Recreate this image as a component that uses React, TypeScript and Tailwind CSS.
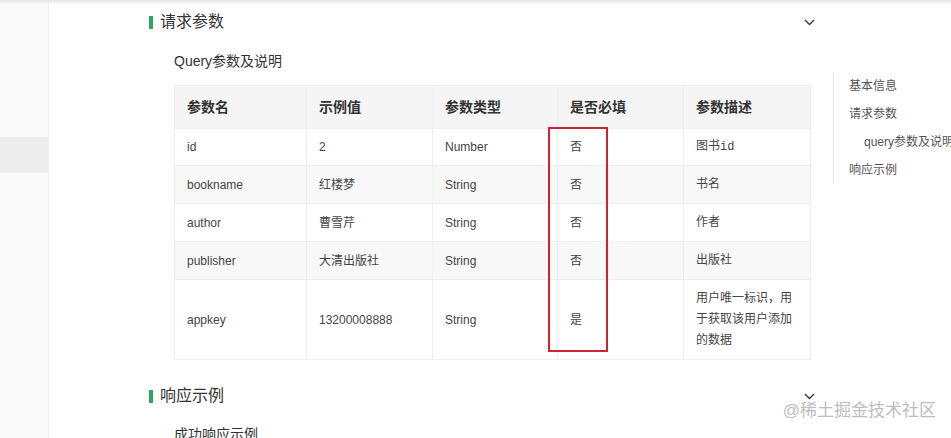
import React from 'react';

const rows = [
  { name: 'id', value: '2', type: 'Number', required: '否', desc: 'book-id' },
  { name: 'bookname', value: '红楼梦', type: 'String', required: '否', desc: '书名' },
  { name: 'author', value: '曹雪芹', type: 'String', required: '否', desc: '作者' },
  { name: 'publisher', value: '大清出版社', type: 'String', required: '否', desc: '出版社' },
  { name: 'appkey', value: '13200008888', type: 'String', required: '是', desc: '用户唯一标识，用于获取该用户添加的数据' },
];

const Chevron = () => (
  <svg width="11" height="7" viewBox="0 0 11 7" fill="none">
    <polyline points="1,1 5.5,5.5 10,1" stroke="#333" strokeWidth="1.3" />
  </svg>
);

const SectionTitle = ({ title }: { title: string }) => (
  <div className="flex h-[20px] items-center justify-between">
    <div className="flex items-center">
      <span className="mr-[7px] h-[13px] w-[4px] bg-[#2aa85c]" />
      <span className="text-[16px] leading-[20px] text-[#333]">{title}</span>
    </div>
    <span className="mr-[4px] flex items-center">
      <Chevron />
    </span>
  </div>
);

export default function App() {
  return (
    <div
      className="relative flex h-[438px] w-[951px] overflow-hidden bg-white"
      style={{ fontFamily: '"Liberation Sans", "Noto Sans CJK SC", sans-serif' }}
    >
      <div className="pointer-events-none absolute inset-x-0 top-0 h-[5px] bg-gradient-to-b from-[#e6e6e6] to-transparent" />

      {/* sidebar */}
      <aside className="w-[49px] shrink-0 border-r border-[#eeeeee] bg-[#fafafa] pt-[137px]">
        <div className="h-[36px] border-y border-[#f0f0f0] bg-[#ededed]" />
      </aside>

      <div className="flex pl-[100px]">
        <main className="w-[670px] shrink-0 pt-[12px]">
          <SectionTitle title="请求参数" />

          <p className="mt-[19px] pl-[25px] text-[14px] leading-[20px] text-[#333]">Query参数及说明</p>

          <div className="relative ml-[25px] mt-[14px] w-[636px]">
            <table className="w-[636px] table-fixed border-collapse border border-[#eeeeee] text-[12px] text-[#444]">
              <colgroup>
                <col className="w-[132px]" />
                <col className="w-[126px]" />
                <col className="w-[125px]" />
                <col className="w-[126px]" />
                <col className="w-[127px]" />
              </colgroup>
              <thead>
                <tr className="h-[43px] bg-[#f5f5f5]">
                  {['参数名', '示例值', '参数类型', '是否必填', '参数描述'].map((h) => (
                    <th key={h} className="border border-[#eeeeee] px-[12px] text-left text-[14px] font-bold text-[#333]">
                      {h}
                    </th>
                  ))}
                </tr>
              </thead>
              <tbody>
                {rows.map((r, i) => (
                  <tr
                    key={r.name}
                    className={`${r.name === 'appkey' ? 'h-[80px]' : i === 0 ? 'h-[37px]' : 'h-[38px]'} ${i % 2 === 1 ? 'bg-[#f8f8f8]' : 'bg-white'}`}
                  >
                    <td className="border border-[#eeeeee] px-[12px]">{r.name}</td>
                    <td className="border border-[#eeeeee] px-[12px]">{r.value}</td>
                    <td className="border border-[#eeeeee] px-[12px]">{r.type}</td>
                    <td className="border border-[#eeeeee] px-[12px]">{r.required}</td>
                    <td className="border border-[#eeeeee] px-[12px] leading-[21px]">
                      {r.desc === 'book-id' ? (
                        <>
                          图书<span style={{ fontFamily: '"Liberation Mono", monospace' }}>id</span>
                        </>
                      ) : (
                        r.desc
                      )}
                    </td>
                  </tr>
                ))}
              </tbody>
            </table>
            <div className="pointer-events-none absolute left-[374px] top-[42px] h-[225px] w-[60px] border-2 border-[#cf2233]" />
          </div>

          <div className="mt-[26px]">
            <SectionTitle title="响应示例" />
          </div>

          <p className="mt-[18px] pl-[25px] text-[14px] leading-[20px] text-[#333]">成功响应示例</p>
        </main>

        <nav className="ml-[14px] mt-[72px] h-[112px] shrink-0 whitespace-nowrap border-l border-[#e5e5e5] text-[12px] leading-[28px] text-[#555]">
          <div className="pl-[15px]">基本信息</div>
          <div className="pl-[15px]">请求参数</div>
          <div className="pl-[30px]">query参数及说明</div>
          <div className="pl-[15px]">响应示例</div>
        </nav>
      </div>

      <div className="pointer-events-none absolute right-[15px] top-[400px] text-[17px] leading-[22px] text-[#bdbdbd]">
        @稀土掘金技术社区
      </div>
    </div>
  );
}
